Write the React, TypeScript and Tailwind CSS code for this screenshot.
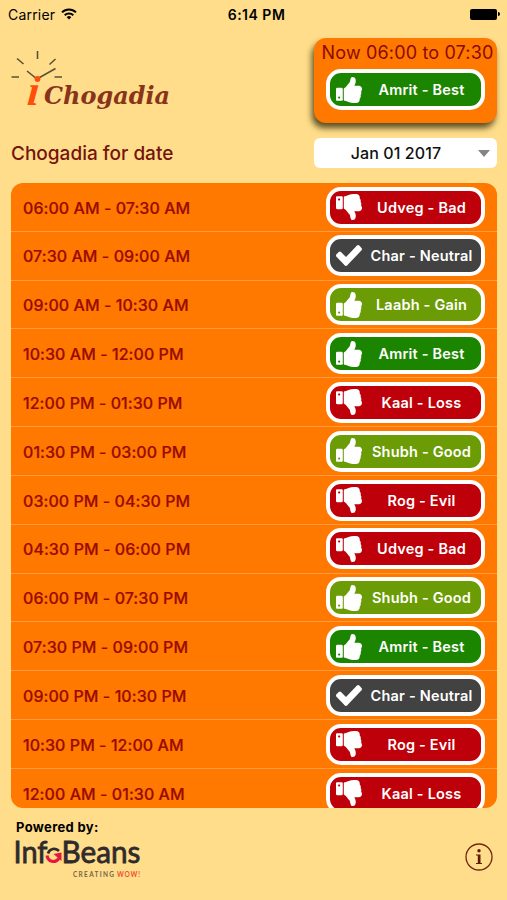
type Tone = 'best' | 'good' | 'bad' | 'neutral';

interface Slot {
  time: string;
  label: string;
  tone: Tone;
}

const slots: Slot[] = [
  { time: '06:00 AM - 07:30 AM', label: 'Udveg - Bad', tone: 'bad' },
  { time: '07:30 AM - 09:00 AM', label: 'Char - Neutral', tone: 'neutral' },
  { time: '09:00 AM - 10:30 AM', label: 'Laabh - Gain', tone: 'good' },
  { time: '10:30 AM - 12:00 PM', label: 'Amrit - Best', tone: 'best' },
  { time: '12:00 PM - 01:30 PM', label: 'Kaal - Loss', tone: 'bad' },
  { time: '01:30 PM - 03:00 PM', label: 'Shubh - Good', tone: 'good' },
  { time: '03:00 PM - 04:30 PM', label: 'Rog - Evil', tone: 'bad' },
  { time: '04:30 PM - 06:00 PM', label: 'Udveg - Bad', tone: 'bad' },
  { time: '06:00 PM - 07:30 PM', label: 'Shubh - Good', tone: 'good' },
  { time: '07:30 PM - 09:00 PM', label: 'Amrit - Best', tone: 'best' },
  { time: '09:00 PM - 10:30 PM', label: 'Char - Neutral', tone: 'neutral' },
  { time: '10:30 PM - 12:00 AM', label: 'Rog - Evil', tone: 'bad' },
  { time: '12:00 AM - 01:30 AM', label: 'Kaal - Loss', tone: 'bad' },
];

const toneClass: Record<Tone, string> = {
  best: 'bg-[#1c8500]',
  good: 'bg-[#6b9c06]',
  bad: 'bg-[#bd0009]',
  neutral: 'bg-[#424242]',
};

function ThumbIcon({ down = false }: { down?: boolean }) {
  return (
    <svg
      className={`h-[26px] w-[26px] shrink-0 ${down ? '-scale-y-100' : ''}`}
      viewBox="64 128 1600 1536"
      preserveAspectRatio="none"
      fill="currentColor"
    >
      <path d="M320 1344q0-26-19-45t-45-19q-27 0-45.500 19t-18.500 45q0 27 18.500 45.500t45.500 18.500q26 0 45-18.500t19-45.500zm160-512v640q0 26-19 45t-45 19h-288q-26 0-45-19t-19-45v-640q0-26 19-45t45-19h288q26 0 45 19t19 45zm1184 0q0 86-55 149 15 44 15 76 3 76-43 137 17 56 0 117-15 57-54 94 9 112-49 181-64 76-197 78h-129q-66 0-144-15.500t-121.500-29-120.500-39.500q-123-43-158-44-26-1-45-19.500t-19-44.500v-641q0-25 18-43.500t43-20.500q24-2 76-59t101-121q68-87 101-120 18-18 31-48t17.500-48.500 13.500-60.500q7-39 12.500-61t19.500-52 34-50q19-19 45-19 46 0 82.500 10.500t60 26 40 40.500 24 45 12 50 5 45 .5 39q0 38-9.500 76t-19 60-27.500 56q-3 6-10 18t-11 22-8 24h277q78 0 135 57t57 135z" />
    </svg>
  );
}

function CheckIcon() {
  return (
    <svg className="h-[21px] w-[26px] shrink-0" viewBox="121 334 1550 1188" preserveAspectRatio="none" fill="currentColor">
      <path d="M1671 566q0 40-28 68l-724 724-136 136q-28 28-68 28t-68-28l-136-136-362-362q-28-28-28-68t28-68l136-136q28-28 68-28t68 28l294 295 656-657q28-28 68-28t68 28l136 136q28 28 28 68z" />
    </svg>
  );
}

function Badge({ label, tone }: { label: string; tone: Tone }) {
  return (
    <div
      className={`flex h-[41px] w-[159px] shrink-0 items-center rounded-[15px] border-4 border-white pl-[6px] text-white ${toneClass[tone]}`}
    >
      {tone === 'neutral' ? <CheckIcon /> : <ThumbIcon down={tone === 'bad'} />}
      <span className="flex-1 whitespace-nowrap pt-px text-center text-[14.500px] leading-5 font-semibold tracking-[0.200px]">
        {label}
      </span>
    </div>
  );
}

function StatusBar() {
  return (
    <div className="grid h-7 grid-cols-3 items-center pl-2 pr-[7px] text-black">
      <div className="flex items-center gap-[6px]">
        <span className="text-[14px] tracking-[0.200px]">Carrier</span>
        <svg className="h-[12px] w-[16px]" viewBox="0 0 16 12" fill="none" stroke="currentColor" strokeWidth="2">
          <path d="M1 4.400a10 10 0 0 1 14 0" />
          <path d="M3.700 7.200a6.200 6.200 0 0 1 8.600 0" />
          <path d="M8 11.500 5.700 9.200a3.300 3.300 0 0 1 4.600 0Z" fill="currentColor" stroke="none" />
        </svg>
      </div>
      <span className="pl-[5px] text-center text-[14px] font-semibold tracking-[0.500px]">6:14 PM</span>
      <div className="flex items-center justify-end">
        <div className="h-[11px] w-[27px] rounded-[2px] bg-black" />
        <div className="ml-px h-1 w-[2px] rounded-r-full bg-black" />
      </div>
    </div>
  );
}

function ChogadiaLogo() {
  return (
    <svg className="h-[64px] w-[162px] overflow-visible" viewBox="0 0 162 64">
      <g stroke="#5a5238" strokeWidth="1.600" fill="none">
        <path d="M26.500 3v8M6 10.500l6.500 5.500M44.500 11l-6 5.500M.5 29H8M43.500 29H51" />
        <path d="M16 23l10 8L44.500 20.500" />
      </g>
      <circle cx="26.500" cy="31" r="2.900" fill="#ff4d0a" />
      <text
        transform="translate(15.500 57) skewX(-5)"
        fontSize="43"
        fontWeight="700"
        fontStyle="italic"
        fill="#ff4d0a"
        fontFamily="'Liberation Serif', serif"
      >
        ı
      </text>
      <text
        x="33"
        y="55.500"
        fontSize="24.500"
        fontWeight="700"
        fontStyle="italic"
        fill="#89341a"
        textLength="126"
        lengthAdjust="spacingAndGlyphs"
        fontFamily="'DejaVu Serif', serif"
      >
        Chogadia
      </text>
    </svg>
  );
}

function InfoBeansLogo() {
  return (
    <svg className="h-[42px] w-[128px] overflow-visible" viewBox="0 0 128 42" fontFamily="Lato, sans-serif">
      <g fill="#302a2c" stroke="#302a2c" strokeWidth="0.800" fontSize="31">
        <text x="-1.500" y="26.500" textLength="34" lengthAdjust="spacingAndGlyphs">Inf</text>
        <text x="46.500" y="26.500" textLength="79" lengthAdjust="spacingAndGlyphs">Beans</text>
      </g>
      <path d="M33 17.500a6.500 6.500 0 0 1 11-2.500" fill="none" stroke="#302a2c" strokeWidth="2.600" />
      <path d="M32 19.500c1 6.500 8 8 12 3" fill="none" stroke="#e5173f" strokeWidth="3.200" />
      <path d="M38.500 18l8-1.500v8.500Z" fill="#e5173f" />
      <g fontSize="6.500" fontWeight="700">
        <text x="58" y="40.500" fill="#77654a" textLength="41">CREATING</text>
        <text x="102" y="40.500" fill="#ec5032" textLength="23">WOW!</text>
      </g>
    </svg>
  );
}

export default function App() {
  return (
    <div className="flex h-[900px] w-[507px] flex-col overflow-hidden bg-[#ffdd8a] font-['Inter',sans-serif]">
      <StatusBar />

      <header className="flex justify-between pl-[11px] pr-[10px] pt-[10px]">
        <div className="pt-[10px]">
          <ChogadiaLogo />
        </div>
        <div className="flex h-[85px] w-[183px] flex-col items-center rounded-xl bg-[#ff7800] pt-[2px] shadow-[-2px_5px_6px_rgba(50,40,10,0.8)]">
          <p className="pl-1 text-[18px] leading-[26px] tracking-[0.150px] whitespace-nowrap text-[#8b0a00]">
            Now 06:00 to 07:30
          </p>
          <div className="mt-[3px]">
            <Badge label="Amrit - Best" tone="best" />
          </div>
        </div>
      </header>

      <div className="mt-[15px] flex h-[30px] shrink-0 items-center justify-between pl-[11px] pr-[10px]">
        <h1 className="pt-[2px] text-[19px] font-medium text-[#74140d]">Chogadia for date</h1>
        <button type="button" className="flex h-[30px] w-[183px] items-center rounded-md bg-white pr-[7px] text-[#111]">
          <span className="flex-1 text-[16px] font-medium tracking-[0.100px]">Jan 01 2017</span>
          <svg className="h-[7px] w-[12px]" viewBox="0 0 12 7" fill="#858585">
            <path d="M0 0h12L6 7Z" />
          </svg>
        </button>
      </div>

      <ul className="mt-[15px] ml-[11px] mr-[10px] h-[625px] shrink-0 overflow-hidden rounded-xl bg-[#ff7800]">
        {slots.map(slot => (
          <li
            key={slot.time}
            className="flex h-[48.830px] items-center justify-between border-b border-[#ff9c42] pt-[0.500px] pl-3 pr-3"
          >
            <span className="pt-px text-[16px] font-medium tracking-[0.060px] whitespace-nowrap text-[#990a00] [-webkit-text-stroke:0.2px]">
              {slot.time}
            </span>
            <Badge label={slot.label} tone={slot.tone} />
          </li>
        ))}
      </ul>

      <footer className="flex items-start justify-between pl-[15px] pr-[14px] pt-[10px]">
        <div>
          <p className="pl-px text-[13px] leading-[18px] font-bold tracking-[0.350px] text-black">Powered by:</p>
          <InfoBeansLogo />
        </div>
        <svg className="mt-[25px] h-[28px] w-[28px]" viewBox="0 0 28 28" fill="none">
          <circle cx="14" cy="14" r="13" stroke="#722710" strokeWidth="1.300" />
          <circle cx="14" cy="7.700" r="1.700" fill="#5f1c0c" />
          <path d="M11 11.500h4.500v8.500H17v1h-6v-1h1.800v-7.500H11Z" fill="#5f1c0c" />
        </svg>
      </footer>
    </div>
  );
}
